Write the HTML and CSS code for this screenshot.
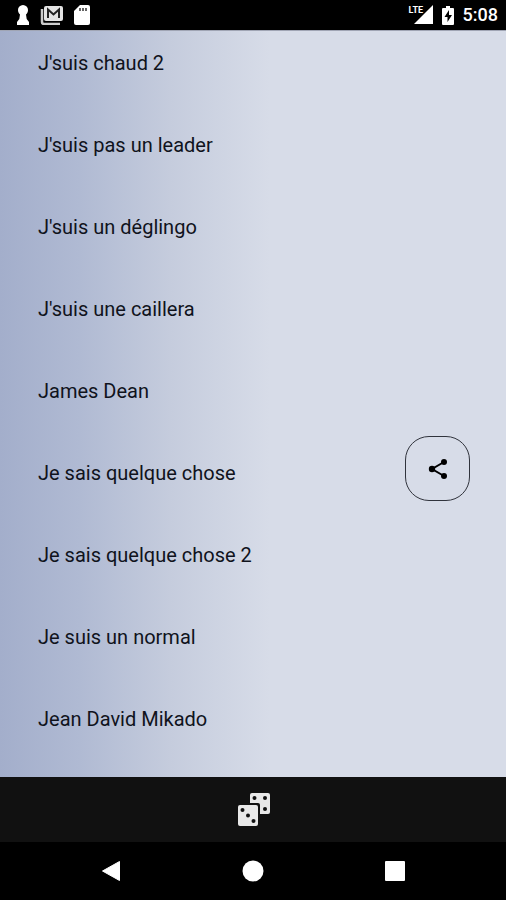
FILE: index.html
```html
<!DOCTYPE html>
<html lang="fr">
<head>
<meta charset="utf-8">
<meta name="viewport" content="width=device-width, initial-scale=1">
<title>Sons</title>
<link rel="stylesheet" href="styles.css">
</head>
<body>
<header class="status">
  <div class="status-group notifications">
    <svg width="14" height="20" viewBox="0 0 14 20" aria-hidden="true"><path fill="#fff" d="M7 0a5 5 0 0 1 5 5.200c0 2-1 3.300-2 4.200l.7 4.600 2.300 3V20H1v-3l2.300-3L4 9.400C3 8.500 2 7.200 2 5.200A5 5 0 0 1 7 0z"/></svg>
    <svg width="24" height="20" viewBox="0 0 24 20" aria-hidden="true"><path fill="none" stroke="#ccc" stroke-width="2.500" d="M2 4v13q0 2 2 2h16"/><rect x="4" y="1" width="19" height="15" rx="2" fill="#e4e4e4"/><path fill="none" stroke="#222" stroke-width="2" d="M8 13V4.500l5.500 5 5.500-5V13"/></svg>
    <svg width="16" height="20" viewBox="0 0 16 20" aria-hidden="true"><path fill="#fff" d="M6 0h8q2 0 2 2v16q0 2-2 2H2q-2 0-2-2V6z"/><path stroke="#333" stroke-width="1.500" d="M6 3v3M9 3v3M12 3v3"/></svg>
  </div>
  <div class="status-group">
    <div class="signal">
      <svg width="24" height="20" viewBox="0 0 24 20" aria-hidden="true"><path fill="#fff" d="M24 0v19H5z"/></svg>
      <span class="network">LTE</span>
    </div>
    <svg width="12" height="19" viewBox="0 0 12 19" aria-hidden="true"><path fill="#fff" d="M4 0h4v2h3q1 0 1 1v15q0 1-1 1H1q-1 0-1-1V3q0-1 1-1h3z"/><path fill="#000" d="M7 4 2.500 11H5.500v5L10 9H7z"/></svg>
    <time class="clock">5:08</time>
  </div>
</header>
<main class="content">
  <ul class="sounds">
    <li><button type="button">J'suis chaud 2</button></li>
    <li><button type="button">J'suis pas un leader</button></li>
    <li><button type="button">J'suis un déglingo</button></li>
    <li><button type="button">J'suis une caillera</button></li>
    <li><button type="button">James Dean</button></li>
    <li><button type="button">Je sais quelque chose</button></li>
    <li><button type="button">Je sais quelque chose 2</button></li>
    <li><button type="button">Je suis un normal</button></li>
    <li><button type="button">Jean David Mikado</button></li>
  </ul>
  <button class="share" type="button" aria-label="Partager">
    <svg width="20" height="22" viewBox="0 0 20 22" aria-hidden="true"><path fill="none" stroke="#000" stroke-width="2" d="M16 4 4 11l12 7"/><circle cx="16" cy="4" r="3"/><circle cx="4" cy="11" r="3.200"/><circle cx="16" cy="18" r="3"/></svg>
  </button>
</main>
<div class="toolbar">
  <button type="button" aria-label="Son au hasard">
    <svg width="34" height="34" viewBox="0 0 34 34" aria-hidden="true"><rect x="14" y="0" width="20" height="21" rx="2" fill="#e8e8e8"/><g fill="#111"><circle cx="18.500" cy="5" r="2"/><circle cx="29" cy="5" r="2"/><circle cx="29" cy="16" r="2"/><rect x="0" y="10" width="24" height="24" rx="2"/></g><rect x="2" y="12" width="20" height="21" rx="2" fill="#e8e8e8"/><g fill="#111"><circle cx="6.500" cy="17" r="2"/><circle cx="12" cy="22.500" r="2"/><circle cx="17.500" cy="28" r="2"/></g></svg>
  </button>
</div>
<nav class="navigation">
  <button type="button" aria-label="Retour"><svg width="22" height="22" viewBox="0 0 22 22" aria-hidden="true"><path fill="#fff" stroke="#fff" stroke-linejoin="round" d="M19.500 1.500v19L2.500 11z"/></svg></button>
  <button type="button" aria-label="Accueil"><svg width="22" height="22" viewBox="0 0 22 22" aria-hidden="true"><circle cx="11" cy="11" r="10.500" fill="#fff"/></svg></button>
  <button type="button" aria-label="Applications récentes"><svg width="22" height="22" viewBox="0 0 22 22" aria-hidden="true"><rect x="1" y="1" width="20" height="20" rx="1" fill="#fff"/></svg></button>
</nav>
</body>
</html>
```
FILE: styles.css
```css
* {
  box-sizing: border-box;
}

body {
  margin: 0;
  min-height: 100vh;
  display: flex;
  flex-direction: column;
  background: #000;
  color: #10131c;
  font-family: Roboto, sans-serif;
}

button {
  padding: 0;
  border: 0;
  background: none;
  color: inherit;
  font: inherit;
  cursor: pointer;
}

svg {
  display: block;
}

.status {
  height: 30px;
  display: flex;
  align-items: center;
  justify-content: space-between;
  padding: 0 8px 0 16px;
  color: #fff;
}

.status-group {
  display: flex;
  align-items: center;
  gap: 9px;
}

.notifications {
  gap: 10px;
}

.signal {
  position: relative;
}

.network {
  position: absolute;
  top: 0;
  left: 0;
  font-size: 9px;
  font-weight: 700;
  line-height: 10px;
  background: #000;
}

.clock {
  font-size: 18px;
  font-weight: 500;
  line-height: 24px;
}

.content {
  position: relative;
  flex: 1;
  border-top: 1px solid #a0a5b4;
  background: linear-gradient(90deg, #a3aecb 0, #b0bad3 80px, #c5ccdd 170px, #d7dce8 270px);
}

.sounds {
  display: flex;
  flex-direction: column;
  gap: 58px;
  margin: 0;
  padding: 20px 38px;
  list-style: none;
}

.sounds button {
  display: block;
  width: 100%;
  font-size: 20px;
  line-height: 24px;
  text-align: left;
}

.share {
  position: absolute;
  top: 405px;
  right: 36px;
  width: 65px;
  height: 65px;
  display: grid;
  place-items: center;
  border: 1px solid #30333c;
  border-radius: 24px;
}

.toolbar {
  height: 65px;
  display: grid;
  place-items: center;
  background: #111;
}

.navigation {
  height: 58px;
  display: flex;
  justify-content: center;
  align-items: center;
  gap: 120px;
}
```
